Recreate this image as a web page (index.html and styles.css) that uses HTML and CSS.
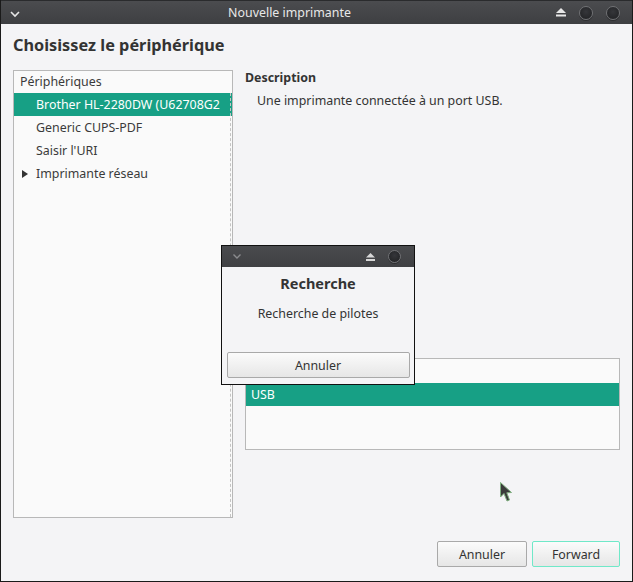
FILE: index.html
```html
<!DOCTYPE html>
<html lang="fr">
<head>
<meta charset="utf-8">
<title>Nouvelle imprimante</title>
<link rel="stylesheet" href="styles.css">
</head>
<body>
<div class="window">
  <div class="titlebar">
    <span class="tb-menu">
      <svg width="12" height="8" viewBox="0 0 12 8"><path d="M2 2 L6 6 L10 2" fill="none" stroke="#e6e6e6" stroke-width="1.6"/></svg>
    </span>
    <span class="tb-title">Nouvelle imprimante</span>
    <span class="tb-buttons">
      <svg class="eject" width="10" height="9" viewBox="0 0 10 9"><path d="M5 0 L10 5 L0 5 Z" fill="#e8e8e8"/><rect x="0" y="6.5" width="10" height="2" fill="#e8e8e8"/></svg>
      <span class="tb-circle"></span>
      <span class="tb-circle"></span>
    </span>
  </div>
  <div class="content">
    <h1 class="heading">Choisissez le périphérique</h1>
    <div class="main">
      <div class="devlist">
        <div class="row header">Périphériques</div>
        <div class="row item sel">Brother HL-2280DW (U62708G2</div>
        <div class="row item">Generic CUPS-PDF</div>
        <div class="row item">Saisir l'URI</div>
        <div class="row item expander"><span class="arrow"></span>Imprimante réseau</div>
      </div>
      <div class="right">
        <div class="desc-label">Description</div>
        <div class="desc">Une imprimante connectée à un port USB.</div>
        <div class="conn-list">
          <div class="crow"></div>
          <div class="crow sel">USB</div>
        </div>
      </div>
    </div>
    <div class="buttons">
      <button class="btn">Annuler</button>
      <button class="btn focus">Forward</button>
    </div>
  </div>

  <div class="dialog">
    <div class="dlg-titlebar">
      <svg width="10" height="7" viewBox="0 0 10 7"><path d="M1.5 1.5 L5 5 L8.5 1.5" fill="none" stroke="#8a8b8e" stroke-width="1.4"/></svg>
      <span class="dlg-right">
        <svg width="9" height="8" viewBox="0 0 9 8"><path d="M4.5 0 L9 4.5 L0 4.5 Z" fill="#d8d8d8"/><rect x="0" y="6" width="9" height="2" fill="#d8d8d8"/></svg>
        <span class="tb-circle small"></span>
      </span>
    </div>
    <div class="dlg-body">
      <div class="dlg-heading">Recherche</div>
      <div class="dlg-text">Recherche de pilotes</div>
      <button class="btn wide">Annuler</button>
    </div>
  </div>

  <svg class="cursor" width="16" height="24" viewBox="0 0 16 24"><path d="M1.5 1.5 L1.5 16 L5 12.5 L8 20 L10.5 19 L7.8 11.8 L12.5 11.5 Z" fill="#3b3b3b" stroke="#7fae7f" stroke-width="1"/></svg>
</div>
</body>
</html>
```
FILE: styles.css
```css
* { box-sizing: border-box; }
html, body {
  margin: 0;
  padding: 0;
  background: #f4f4f6;
}
body {
  font-family: "Noto Sans", "Open Sans", sans-serif;
  font-size: 12.4px;
  color: #333;
}
.window {
  position: relative;
  width: 633px;
  height: 582px;
  border: 1px solid #1a1a1a;
  border-top: none;
  background: #f4f4f6;
  display: flex;
  flex-direction: column;
  overflow: hidden;
}
.titlebar {
  height: 24px;
  flex: none;
  background: linear-gradient(#4b4c4f, #3e3f42);
  border-top: 1px solid #2a2b2d;
  display: flex;
  align-items: center;
  padding: 0 12px 0 8px;
  color: #e8e8e8;
}
.tb-menu { width: 14px; display: flex; align-items: center; padding-top: 2px; }
.tb-title {
  flex: 1;
  text-align: center;
  font-size: 12.4px;
}
.tb-buttons { display: flex; align-items: center; gap: 13px; }
.eject { margin-top: -1px; }
.tb-circle {
  width: 14px;
  height: 14px;
  border-radius: 50%;
  background: radial-gradient(circle at 50% 40%, #35363a, #1f2022);
  border: 1.5px solid #707174;
  box-shadow: 0 1px 0 rgba(0,0,0,0.3);
}
.tb-circle.small { width: 13px; height: 13px; }
.content {
  flex: 1;
  display: flex;
  flex-direction: column;
  padding: 10px 12px 0 12px;
}
.heading {
  margin: 0;
  font-size: 16.3px;
  font-weight: bold;
  line-height: 23px;
  color: #333;
}
.main {
  margin-top: 13px;
  height: 448px;
  display: flex;
  gap: 12px;
}
.devlist {
  position: relative;
  width: 220px;
  flex: none;
  border: 1px solid #b8b8b8;
  background: #fafafa;
  overflow: hidden;
}
.devlist::after {
  content: "";
  position: absolute;
  top: 22px;
  bottom: 0;
  right: 1px;
  border-right: 1px dashed #c4c4c4;
}
.row {
  height: 23px;
  line-height: 23px;
  white-space: nowrap;
  color: #3a3a3a;
}
.row.header { height: 22px; line-height: 21px; padding-left: 6px; }
.row.item { padding-left: 22px; }
.row.sel { background: #17a085; color: #fff; }
.expander { display: flex; align-items: center; padding-left: 8px !important; }
.arrow {
  width: 0; height: 0;
  border-top: 4.5px solid transparent;
  border-bottom: 4.5px solid transparent;
  border-left: 6px solid #333;
  margin-right: 8px;
}
.right {
  flex: 1;
  display: flex;
  flex-direction: column;
  padding-top: 1px;
}
.desc-label {
  font-weight: bold;
  line-height: 14px;
  color: #333;
}
.desc {
  margin-top: 9px;
  padding-left: 12px;
  line-height: 14px;
  color: #333;
}
.conn-list {
  margin-top: 250px;
  height: 92px;
  border: 1px solid #b8b8b8;
  background: #fafafa;
}
.crow { height: 24px; line-height: 23px; padding-left: 5px; }
.crow.sel { background: #17a085; color: #fff; height: 23px; }
.buttons {
  margin-top: 23px;
  display: flex;
  justify-content: flex-end;
  gap: 5px;
}
.btn {
  font-family: inherit;
  font-size: 12.4px;
  color: #333;
  height: 26px;
  width: 90px;
  border: 1px solid #a9a9a9;
  border-radius: 2px;
  background: linear-gradient(#fbfbfb, #e6e6e6);
  padding: 0;
}
.btn.focus { border-color: #70e8c8; width: 88px; }
.dialog {
  position: absolute;
  left: 220px;
  top: 245px;
  width: 194px;
  height: 140px;
  border: 1px solid #111;
  background: #f4f4f6;
  display: flex;
  flex-direction: column;
}
.dlg-titlebar {
  height: 21px;
  background: linear-gradient(#4a4b4e, #3f4043);
  display: flex;
  align-items: center;
  justify-content: space-between;
  padding: 0 13px 0 10px;
}
.dlg-right { display: flex; align-items: center; gap: 13px; }
.dlg-body {
  flex: 1;
  display: flex;
  flex-direction: column;
  align-items: center;
  padding: 7px 5px 0;
}
.dlg-heading { font-weight: bold; font-size: 14.5px; line-height: 18px; color: #333; }
.dlg-text { margin-top: 15px; line-height: 14px; color: #333; }
.btn.wide { width: 183px; margin-top: 31px; }
.cursor {
  position: absolute;
  left: 498px;
  top: 481px;
}
```
